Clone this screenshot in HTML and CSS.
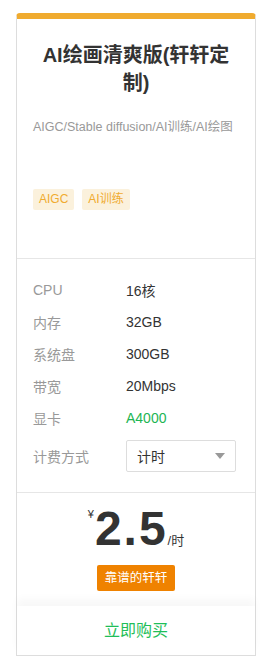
FILE: index.html
```html
<!DOCTYPE html>
<html>
<head>
  <title>AI绘画清爽版(轩轩定制)</title>
  <meta charset="utf-8">
  <meta name="viewport" content="width=device-width, initial-scale=1.0">
  <link rel="stylesheet" href="styles.css">
</head>
<body>
  <div class="container">
    <div class="card">
      <div class="card-head">
        <h2 class="title">AI绘画清爽版(轩轩定制)</h2>
        <p class="desc">AIGC/Stable diffusion/AI训练/AI绘图</p>
        <div class="tags">
          <span class="tag">AIGC</span>
          <span class="tag">AI训练</span>
        </div>
      </div>

      <div class="specs">
        <div class="spec-row">
          <span class="label">CPU</span>
          <span class="value">16核</span>
        </div>
        <div class="spec-row">
          <span class="label">内存</span>
          <span class="value">32GB</span>
        </div>
        <div class="spec-row">
          <span class="label">系统盘</span>
          <span class="value">300GB</span>
        </div>
        <div class="spec-row">
          <span class="label">带宽</span>
          <span class="value">20Mbps</span>
        </div>
        <div class="spec-row">
          <span class="label">显卡</span>
          <span class="value gpu">A4000</span>
        </div>
        <div class="spec-row billing">
          <span class="label">计费方式</span>
          <div class="select">
            <span>计时</span>
            <span class="arrow"></span>
          </div>
        </div>
      </div>

      <div class="price-box">
        <div class="price">
          <span class="currency">¥</span>
          <span class="amount">2.5</span>
          <span class="unit">/时</span>
        </div>
        <span class="badge">靠谱的轩轩</span>
      </div>

      <div class="buy">立即购买</div>
    </div>
  </div>
</body>
</html>
```

FILE: styles.css
```css
body {
  margin: 0;
  background-color: #fff;
  font-family: "Helvetica Neue", "Liberation Sans", Arial, "Noto Sans CJK SC", sans-serif;
  color: #333;
}
.container {
  padding: 13px 19px 0 16px;
}
.card {
  width: 240px;
  box-sizing: border-box;
  border: 1px solid #ddd;
  border-top: 6px solid #f0ab2f;
  border-radius: 4px 4px 0 0;
  background: #fff;
}
.card-head {
  padding: 22px 16px 48px;
}
.title {
  margin: 0;
  font-size: 20px;
  line-height: 28px;
  font-weight: bold;
  text-align: center;
  color: #333;
}
.desc {
  margin: 20px 0 0;
  font-size: 12.5px;
  line-height: 20px;
  color: #999;
  white-space: nowrap;
}
.tags {
  display: flex;
  gap: 8px;
  margin-top: 52px;
}
.tag {
  padding: 0 6px;
  font-size: 12px;
  line-height: 21px;
  color: #f0ab2f;
  background-color: #fbf1dc;
  border-radius: 2px;
}
.specs {
  border-top: 1px solid #e6e6e6;
  padding: 15px 19px 20px 16px;
}
.spec-row {
  display: flex;
  align-items: center;
  height: 32px;
  font-size: 14px;
}
.label {
  width: 93px;
  color: #999;
}
.value {
  color: #333;
}
.gpu {
  color: #1db554;
}
.billing {
  margin-top: 6px;
}
.select {
  display: flex;
  align-items: center;
  justify-content: space-between;
  box-sizing: border-box;
  width: 110px;
  height: 32px;
  padding: 0 10px;
  border: 1px solid #ddd;
  border-radius: 2px;
  color: #333;
}
.arrow {
  width: 0;
  height: 0;
  border-left: 5px solid transparent;
  border-right: 5px solid transparent;
  border-top: 6px solid #999;
}
.price-box {
  border-top: 1px solid #e6e6e6;
  padding: 12px 0 15px;
  display: flex;
  flex-direction: column;
  align-items: center;
}
.price {
  display: flex;
  align-items: baseline;
}
.currency {
  align-self: flex-start;
  font-size: 11px;
  line-height: 14px;
  margin-top: 2px;
  margin-right: 1px;
  color: #333;
}
.amount {
  font-size: 48px;
  line-height: 47px;
  font-weight: bold;
  letter-spacing: 2px;
  color: #333;
}
.unit {
  font-size: 13px;
  color: #333;
}
.badge {
  margin-top: 13px;
  padding: 0 8px;
  font-size: 12.5px;
  line-height: 26px;
  color: #fff;
  background-color: #ef8200;
  border-radius: 2px;
}
.buy {
  height: 49px;
  line-height: 49px;
  text-align: center;
  font-size: 16px;
  color: #1fbe59;
  background: #fff;
  box-shadow: 0 -7px 8px rgba(0,0,0,0.03);
  position: relative;
}
```
